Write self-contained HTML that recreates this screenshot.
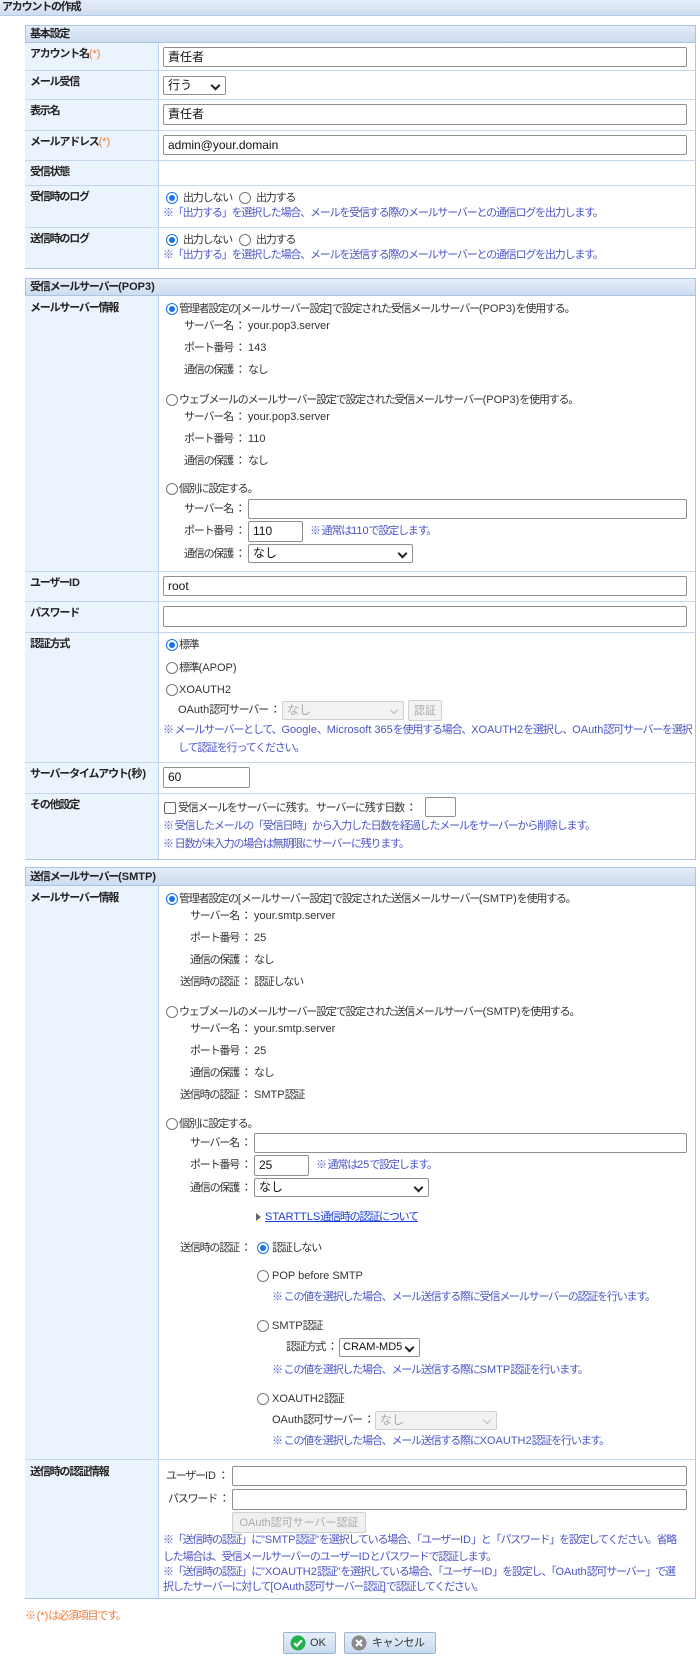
<!DOCTYPE html>
<html><head><meta charset="utf-8"><style>
*{margin:0;padding:0;box-sizing:border-box}
body{width:700px;height:1658px;position:relative;background:#fff;font-family:"Liberation Sans","Noto Sans CJK JP",sans-serif;overflow:hidden}
.t{position:absolute;white-space:nowrap;line-height:16px;font-size:11px;letter-spacing:-1.2px;color:#333}
.t i{font-style:normal;letter-spacing:0;font-size:11px}
.b{font-weight:bold;color:#222}
.n{color:#4a55c6}
.o{color:#f07a3a}
.sec{position:absolute;left:25px;width:671px;border:1px solid #a9c5e5;background:#fff}
.hd{position:absolute;left:25px;width:671px;background:linear-gradient(#e4edf8,#cddcf0);border:1px solid #a9c5e5}
.lab{position:absolute;left:25px;width:134px;background:#ebf3fd;border-right:1px solid #b9d0ea}
.ln{position:absolute;left:25px;width:671px;height:1px;background:#c3d6ee}
.in{position:absolute;border:1px solid #8f8f8f;border-radius:2px;background:#fff;font-size:12px;line-height:18px;padding-left:4px;color:#111;white-space:nowrap}
.sel{position:absolute;border:1px solid #8f8f8f;border-radius:2px;background:#fff;font-size:12px;line-height:17px;padding-left:4px;color:#111;white-space:nowrap}
.sel:after{content:"";position:absolute;right:6px;top:5px;width:5px;height:5px;border-right:2px solid #222;border-bottom:2px solid #222;transform:rotate(45deg)}
.dis{background:#f2f2f2;border-color:#d0d0d0;color:#aaa}
.dis:after{border-color:#bbb;border-width:1px}
.r{position:absolute;width:12px;height:12px;border:1px solid #777;border-radius:50%;background:#fff}
.rc{border-color:#1a73e8}
.rc:after{content:"";position:absolute;left:2px;top:2px;width:6px;height:6px;border-radius:50%;background:#1a73e8}
.cb{position:absolute;width:12px;height:12px;border:1px solid #666;border-radius:2px;background:#fff}
.btn{position:absolute;border:1px solid #9ab4d4;border-radius:2px;background:linear-gradient(#e6effa,#c8daf0);font-size:11px;line-height:20px;color:#333}
</style></head><body>

<div style="position:absolute;left:0;top:0;width:700px;height:16px;background:linear-gradient(#e6eef9,#cfdcef);border-bottom:1px solid #b6cbe5"></div>
<div class="t b" style="left:2px;top:-1px">アカウントの作成</div>

<div class="sec" style="top:25px;height:244px"></div>
<div class="lab" style="top:42px;height:226px"></div>
<div class="hd" style="top:25px;height:18px"></div>
<div class="t b" style="left:30px;top:26px">基本設定</div>
<div class="ln" style="top:70px"></div><div class="ln" style="top:99px"></div><div class="ln" style="top:130px"></div><div class="ln" style="top:160px"></div><div class="ln" style="top:185px"></div><div class="ln" style="top:227px"></div>
<div class="t b" style="left:30px;top:46px">アカウント名<span class="o" style="font-weight:normal"><i>(*)</i></span></div>
<div class="t b" style="left:30px;top:74px">メール受信</div>
<div class="t b" style="left:30px;top:103px">表示名</div>
<div class="t b" style="left:30px;top:134px">メールアドレス<span class="o" style="font-weight:normal"><i>(*)</i></span></div>
<div class="t b" style="left:30px;top:164px">受信状態</div>
<div class="t b" style="left:30px;top:189px">受信時のログ</div>
<div class="t b" style="left:30px;top:231px">送信時のログ</div>
<div class="in" style="left:163px;top:47px;width:524px;height:20px">責任者</div>
<div class="sel" style="left:163px;top:76px;width:63px;height:19px">行う</div>
<div class="in" style="left:163px;top:104px;width:524px;height:21px">責任者</div>
<div class="in" style="left:163px;top:135px;width:524px;height:20px">admin@your.domain</div>
<div class="r rc" style="left:166px;top:192px"></div><div class="t" style="left:183px;top:190px">出力しない</div>
<div class="r" style="left:239px;top:192px"></div><div class="t" style="left:256px;top:190px">出力する</div>
<div class="t n" style="left:163px;top:205px">※「出力する」を選択した場合、メールを受信する際のメールサーバーとの通信ログを出力します。</div>
<div class="r rc" style="left:166px;top:234px"></div><div class="t" style="left:183px;top:232px">出力しない</div>
<div class="r" style="left:239px;top:234px"></div><div class="t" style="left:256px;top:232px">出力する</div>
<div class="t n" style="left:163px;top:247px">※「出力する」を選択した場合、メールを送信する際のメールサーバーとの通信ログを出力します。</div>

<div class="sec" style="top:278px;height:582px"></div>
<div class="lab" style="top:295px;height:564px"></div>
<div class="hd" style="top:278px;height:18px"></div>
<div class="t b" style="left:30px;top:279px">受信メールサーバー<i>(POP3)</i></div>
<div class="ln" style="top:571px"></div><div class="ln" style="top:601px"></div><div class="ln" style="top:632px"></div><div class="ln" style="top:762px"></div><div class="ln" style="top:793px"></div>
<div class="t b" style="left:30px;top:300px">メールサーバー情報</div>
<div class="t b" style="left:30px;top:575px">ユーザー<i>ID</i></div>
<div class="t b" style="left:30px;top:605px">パスワード</div>
<div class="t b" style="left:30px;top:636px">認証方式</div>
<div class="t b" style="left:30px;top:766px">サーバータイムアウト<i>(秒)</i></div>
<div class="t b" style="left:30px;top:797px">その他設定</div>

<div class="r rc" style="left:166px;top:303px"></div><div class="t" style="left:179px;top:301px">管理者設定の<i>[</i>メールサーバー設定<i>]</i>で設定された受信メールサーバー<i>(POP3)</i>を使用する。</div>
<div class="t" style="left:184px;top:318px">サーバー名 ：</div><div class="t" style="left:248px;top:318px"><i>your.pop3.server</i></div>
<div class="t" style="left:184px;top:340px">ポート番号 ：</div><div class="t" style="left:248px;top:340px"><i>143</i></div>
<div class="t" style="left:184px;top:362px">通信の保護 ：</div><div class="t" style="left:248px;top:362px">なし</div>
<div class="r" style="left:166px;top:394px"></div><div class="t" style="left:179px;top:392px">ウェブメールのメールサーバー設定で設定された受信メールサーバー<i>(POP3)</i>を使用する。</div>
<div class="t" style="left:184px;top:409px">サーバー名 ：</div><div class="t" style="left:248px;top:409px"><i>your.pop3.server</i></div>
<div class="t" style="left:184px;top:431px">ポート番号 ：</div><div class="t" style="left:248px;top:431px"><i>110</i></div>
<div class="t" style="left:184px;top:453px">通信の保護 ：</div><div class="t" style="left:248px;top:453px">なし</div>
<div class="r" style="left:166px;top:483px"></div><div class="t" style="left:179px;top:481px">個別に設定する。</div>
<div class="t" style="left:184px;top:501px">サーバー名 ：</div><div class="in" style="left:248px;top:499px;width:439px;height:20px"></div>
<div class="t" style="left:184px;top:523px">ポート番号 ：</div><div class="in" style="left:248px;top:521px;width:55px;height:21px">110</div><div class="t n" style="left:310px;top:523px">※ 通常は<i>110</i>で設定します。</div>
<div class="t" style="left:184px;top:546px">通信の保護 ：</div><div class="sel" style="left:248px;top:544px;width:165px;height:19px">なし</div>

<div class="in" style="left:163px;top:576px;width:524px;height:20px">root</div>
<div class="in" style="left:163px;top:606px;width:524px;height:21px"></div>

<div class="r rc" style="left:166px;top:639px"></div><div class="t" style="left:179px;top:637px">標準</div>
<div class="r" style="left:166px;top:662px"></div><div class="t" style="left:179px;top:660px">標準<i>(APOP)</i></div>
<div class="r" style="left:166px;top:684px"></div><div class="t" style="left:179px;top:682px"><i>XOAUTH2</i></div>
<div class="t" style="left:178px;top:702px"><i>OAuth</i>認可サーバー ：</div>
<div class="sel dis" style="left:282px;top:701px;width:122px;height:19px">なし</div>
<div class="btn" style="left:408px;top:700px;width:34px;height:21px;background:#f2f2f2;border-color:#d0d0d0;color:#aaa;text-align:center">認証</div>
<div class="t n" style="left:163px;top:722px">※ メールサーバーとして、<i>Google</i>、<i>Microsoft 365</i>を使用する場合、<i>XOAUTH2</i>を選択し、<i>OAuth</i>認可サーバーを選択</div>
<div class="t n" style="left:178px;top:740px">して認証を行ってください。</div>
<div class="in" style="left:163px;top:767px;width:87px;height:21px">60</div>
<div class="cb" style="left:164px;top:802px"></div><div class="t" style="left:178px;top:800px">受信メールをサーバーに残す。 サーバーに残す日数 ：</div>
<div class="in" style="left:425px;top:797px;width:31px;height:20px"></div>
<div class="t n" style="left:163px;top:818px">※ 受信したメールの「受信日時」から入力した日数を経過したメールをサーバーから削除します。</div>
<div class="t n" style="left:163px;top:836px">※ 日数が未入力の場合は無期限にサーバーに残ります。</div>

<div class="sec" style="top:867px;height:732px"></div>
<div class="lab" style="top:885px;height:713px"></div>
<div class="hd" style="top:867px;height:19px"></div>
<div class="t b" style="left:30px;top:869px">送信メールサーバー<i>(SMTP)</i></div>
<div class="ln" style="top:1459px"></div>
<div class="t b" style="left:30px;top:890px">メールサーバー情報</div>
<div class="t b" style="left:30px;top:1464px">送信時の認証情報</div>

<div class="r rc" style="left:166px;top:893px"></div><div class="t" style="left:179px;top:891px">管理者設定の<i>[</i>メールサーバー設定<i>]</i>で設定された送信メールサーバー<i>(SMTP)</i>を使用する。</div>
<div class="t" style="left:190px;top:908px">サーバー名 ：</div><div class="t" style="left:254px;top:908px"><i>your.smtp.server</i></div>
<div class="t" style="left:190px;top:930px">ポート番号 ：</div><div class="t" style="left:254px;top:930px"><i>25</i></div>
<div class="t" style="left:190px;top:952px">通信の保護 ：</div><div class="t" style="left:254px;top:952px">なし</div>
<div class="t" style="left:180px;top:974px">送信時の認証 ：</div><div class="t" style="left:254px;top:974px">認証しない</div>
<div class="r" style="left:166px;top:1006px"></div><div class="t" style="left:179px;top:1004px">ウェブメールのメールサーバー設定で設定された送信メールサーバー<i>(SMTP)</i>を使用する。</div>
<div class="t" style="left:190px;top:1021px">サーバー名 ：</div><div class="t" style="left:254px;top:1021px"><i>your.smtp.server</i></div>
<div class="t" style="left:190px;top:1043px">ポート番号 ：</div><div class="t" style="left:254px;top:1043px"><i>25</i></div>
<div class="t" style="left:190px;top:1065px">通信の保護 ：</div><div class="t" style="left:254px;top:1065px">なし</div>
<div class="t" style="left:180px;top:1087px">送信時の認証 ：</div><div class="t" style="left:254px;top:1087px"><i>SMTP</i>認証</div>
<div class="r" style="left:166px;top:1118px"></div><div class="t" style="left:179px;top:1116px">個別に設定する。</div>
<div class="t" style="left:190px;top:1135px">サーバー名 ：</div><div class="in" style="left:254px;top:1133px;width:433px;height:20px"></div>
<div class="t" style="left:190px;top:1157px">ポート番号 ：</div><div class="in" style="left:254px;top:1155px;width:55px;height:21px">25</div><div class="t n" style="left:316px;top:1157px">※ 通常は<i>25</i>で設定します。</div>
<div class="t" style="left:190px;top:1180px">通信の保護 ：</div><div class="sel" style="left:254px;top:1178px;width:175px;height:19px">なし</div>
<div style="position:absolute;left:256px;top:1213px;width:0;height:0;border-left:5px solid #666;border-top:4px solid transparent;border-bottom:4px solid transparent"></div>
<div class="t" style="left:265px;top:1209px;color:#1a3cdc;text-decoration:underline"><i>STARTTLS</i>通信時の認証について</div>
<div class="t" style="left:180px;top:1240px">送信時の認証 ：</div>
<div class="r rc" style="left:257px;top:1242px"></div><div class="t" style="left:272px;top:1240px">認証しない</div>
<div class="r" style="left:257px;top:1270px"></div><div class="t" style="left:272px;top:1268px"><i>POP before SMTP</i></div>
<div class="t n" style="left:272px;top:1289px">※ この値を選択した場合、メール送信する際に受信メールサーバーの認証を行います。</div>
<div class="r" style="left:257px;top:1320px"></div><div class="t" style="left:272px;top:1318px"><i>SMTP</i>認証</div>
<div class="t" style="left:286px;top:1339px">認証方式 ：</div><div class="sel" style="left:339px;top:1338px;width:81px;height:19px;font-size:11px;padding-left:3px">CRAM-MD5</div>
<div class="t n" style="left:272px;top:1362px">※ この値を選択した場合、メール送信する際に<i>SMTP</i>認証を行います。</div>
<div class="r" style="left:257px;top:1393px"></div><div class="t" style="left:272px;top:1391px"><i>XOAUTH2</i>認証</div>
<div class="t" style="left:272px;top:1412px"><i>OAuth</i>認可サーバー ：</div><div class="sel dis" style="left:375px;top:1411px;width:122px;height:19px">なし</div>
<div class="t n" style="left:272px;top:1433px">※ この値を選択した場合、メール送信する際に<i>XOAUTH2</i>認証を行います。</div>

<div class="t" style="left:166px;top:1468px">ユーザー<i>ID</i> ：</div><div class="in" style="left:232px;top:1466px;width:455px;height:20px"></div>
<div class="t" style="left:168px;top:1491px">パスワード ：</div><div class="in" style="left:232px;top:1489px;width:455px;height:21px"></div>
<div class="btn" style="left:232px;top:1512px;width:134px;height:21px;background:#f0f0f0;border-color:#d0d0d0;color:#aaa;text-align:center">OAuth認可サーバー認証</div>
<div class="t n" style="left:163px;top:1532px">※「送信時の認証」に<i>"SMTP</i>認証<i>"</i>を選択している場合、「ユーザー<i>ID</i>」と「パスワード」を設定してください。省略</div>
<div class="t n" style="left:163px;top:1549px">した場合は、受信メールサーバーのユーザー<i>ID</i>とパスワードで認証します。</div>
<div class="t n" style="left:163px;top:1564px">※「送信時の認証」に<i>"XOAUTH2</i>認証<i>"</i>を選択している場合、「ユーザー<i>ID</i>」を設定し、「<i>OAuth</i>認可サーバー」で選</div>
<div class="t n" style="left:163px;top:1579px">択したサーバーに対して<i>[OAuth</i>認可サーバー認証<i>]</i>で認証してください。</div>

<div class="t o" style="left:25px;top:1608px">※ <i>(*)</i>は必須項目です。</div>

<div class="btn" style="left:283px;top:1632px;width:53px;height:22px">
<svg style="position:absolute;left:6px;top:2px" width="16" height="16" viewBox="0 0 16 16"><circle cx="8" cy="8" r="7.5" fill="#22b14c"/><path d="M4.3 8.3l2.5 2.6 5-5.6" stroke="#fff" stroke-width="2.2" fill="none"/></svg>
<span style="position:absolute;left:26px;top:0">OK</span></div>
<div class="btn" style="left:344px;top:1632px;width:92px;height:22px">
<svg style="position:absolute;left:6px;top:2px" width="16" height="16" viewBox="0 0 16 16"><circle cx="8" cy="8" r="7.5" fill="#8a8a8a"/><path d="M5 5l6 6M11 5l-6 6" stroke="#fff" stroke-width="2.2"/></svg>
<span style="position:absolute;left:27px;top:0;letter-spacing:-0.5px">キャンセル</span></div>

</body></html>
